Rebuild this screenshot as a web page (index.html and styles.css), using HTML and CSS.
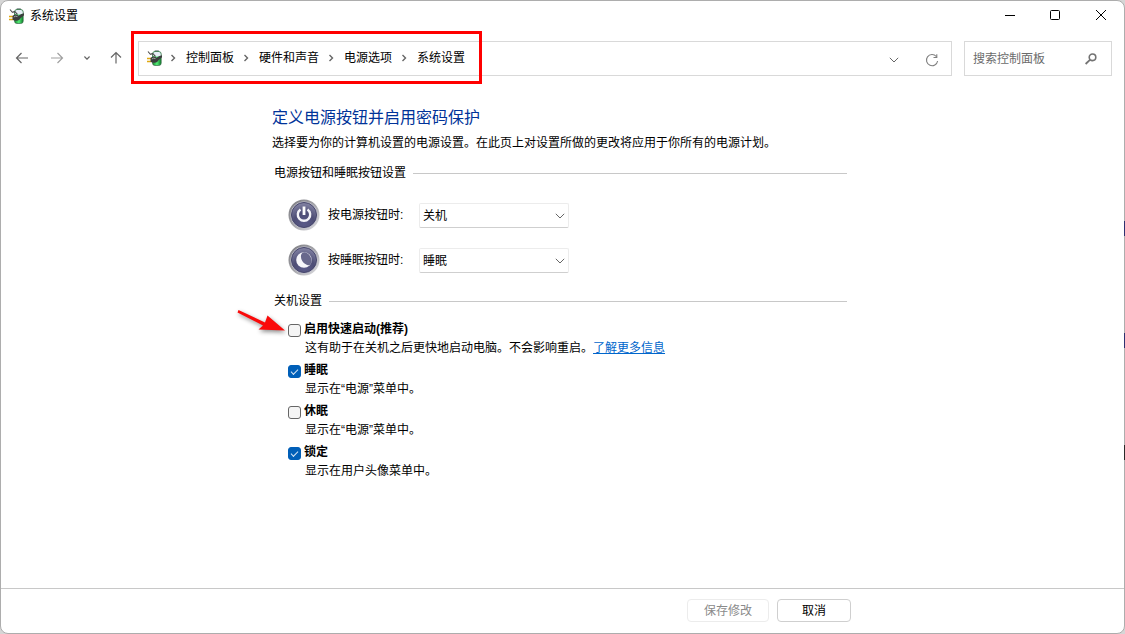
FILE: index.html
```html
<!DOCTYPE html>
<html lang="zh-CN">
<head>
<meta charset="utf-8">
<meta name="viewport" content="width=device-width, initial-scale=1">
<title>系统设置</title>
<link rel="stylesheet" href="styles.css">
</head>
<body>
<svg class="defs" aria-hidden="true">
  <defs>
    <linearGradient id="cell" x1="0" x2="1" y1="0" y2="0">
      <stop offset="0" stop-color="#168a2e"/><stop offset=".5" stop-color="#55ee78"/><stop offset="1" stop-color="#0d7a28"/>
    </linearGradient>
    <linearGradient id="ring" x1="0" x2="1" y1="0" y2="1">
      <stop offset="0" stop-color="#77777c"/><stop offset=".5" stop-color="#a5a5aa"/><stop offset="1" stop-color="#e2e2e6"/>
    </linearGradient>
    <radialGradient id="face" cx=".5" cy=".85" r=".85">
      <stop offset="0" stop-color="#5a5a88"/><stop offset=".5" stop-color="#4e4e76"/><stop offset="1" stop-color="#8686a6"/>
    </radialGradient>
    <symbol id="power-plug" viewBox="0 0 16 16">
      <rect x="7.500" y=".3" width="4.500" height="2" rx=".8" fill="#7d888c"/>
      <rect x="5.500" y="1.500" width="8.700" height="14" rx="2.500" fill="url(#cell)" stroke="#3b6b4a" stroke-width=".7"/>
      <path d="M6 6V4Q6 2 8 2h3.800Q13.800 2 13.800 4v2Q10 7 6 6z" fill="#e6edf6"/>
      <path d="M1 1.500l2.500 3M3.500 4.500Q6 2.500 7 5l1.500 1.500" fill="none" stroke="#4c4c4c" stroke-width="1.100"/>
      <path d="M0 8.500h4M0 11.500h4" stroke="#e0a912" stroke-width="1.400"/>
      <path d="M3.500 8Q5 6.300 8.500 7l1 .8 3-1.800 2.500-.8v2l-3.500 3Q10.500 12.500 8 12.800 4.500 13 3.500 11.500z" fill="#3b3d3d"/>
      <path d="M4.800 9Q6.500 7.600 8.500 8.600" fill="none" stroke="#a0a5a5" stroke-width="1"/>
    </symbol>
    <symbol id="crumb" viewBox="0 0 6 8"><path d="M1.500 1L4.500 4L1.500 7" fill="none" stroke="#666" stroke-width="1.400"/></symbol>
    <symbol id="down" viewBox="0 0 10 6"><path d="M.8 .8L5 5L9.200 .8" fill="none" stroke="#666" stroke-width="1"/></symbol>
  </defs>
</svg>

<div class="window">
  <header class="titlebar">
    <svg class="app-icon"><use href="#power-plug"/></svg>
    <span class="title">系统设置</span>
    <div class="controls">
      <button type="button" aria-label="最小化"><svg viewBox="0 0 12 12"><path d="M2 5.500h10" stroke="#000"/></svg></button>
      <button type="button" aria-label="最大化"><svg viewBox="0 0 12 12"><rect x="1.500" y=".5" width="9" height="9" rx="1" fill="none" stroke="#000"/></svg></button>
      <button type="button" aria-label="关闭"><svg viewBox="0 0 12 12"><path d="M1 0l10 10M11 0L1 10" stroke="#000"/></svg></button>
    </div>
  </header>

  <div class="toolbar">
    <nav class="history" aria-label="导航">
      <button type="button" aria-label="后退"><svg width="14" height="12" viewBox="0 0 14 12"><path d="M13 6H1.500M6.500 1L1.500 6l5 5" fill="none" stroke="#666" stroke-width="1.200"/></svg></button>
      <button type="button" aria-label="前进"><svg width="14" height="12" viewBox="0 0 14 12"><path d="M1 6h11.500M7.500 1l5 5-5 5" fill="none" stroke="#a0a0a0" stroke-width="1.200"/></svg></button>
      <button type="button" class="recent" aria-label="最近"><svg width="6" height="4" viewBox="0 0 6 4"><path d="M.4 .5L3 3.200L5.600 .5" fill="none" stroke="#666" stroke-width="1.200"/></svg></button>
      <button type="button" class="up" aria-label="向上"><svg width="12" height="13" viewBox="0 0 12 13"><path d="M6 12.500V1.500M1 6.500l5-5 5 5" fill="none" stroke="#666" stroke-width="1.200"/></svg></button>
    </nav>
    <div class="address">
      <div class="crumbs">
        <svg class="app-icon"><use href="#power-plug"/></svg>
        <svg class="sep"><use href="#crumb"/></svg>
        <a href="#">控制面板</a>
        <svg class="sep"><use href="#crumb"/></svg>
        <a href="#">硬件和声音</a>
        <svg class="sep"><use href="#crumb"/></svg>
        <a href="#">电源选项</a>
        <svg class="sep"><use href="#crumb"/></svg>
        <a href="#">系统设置</a>
        <span class="highlight"></span>
      </div>
      <div class="address-actions">
        <button type="button" aria-label="展开"><svg width="10" height="6"><use href="#down"/></svg></button>
        <button type="button" aria-label="刷新"><svg width="14" height="14" viewBox="0 0 14 14"><path d="M11.300 3.500A5.600 5.600 0 1 0 12.600 8M11.800 1.300V4.500H8.500" fill="none" stroke="#808080" stroke-width="1.100"/></svg></button>
      </div>
    </div>
    <div class="search">
      <input type="text" placeholder="搜索控制面板" aria-label="搜索控制面板">
      <svg width="12" height="12" viewBox="0 0 12 12"><circle cx="7.500" cy="4.300" r="3.300" fill="none" stroke="#737373" stroke-width="1.600"/><path d="M5.200 6.600L.6 11" stroke="#737373" stroke-width="1.800"/></svg>
    </div>
  </div>

  <main class="content">
    <h1>定义电源按钮并启用密码保护</h1>
    <p class="intro">选择要为你的计算机设置的电源设置。在此页上对设置所做的更改将应用于你所有的电源计划。</p>

    <section>
      <h2><span>电源按钮和睡眠按钮设置</span></h2>
      <div class="actions">
        <div class="action">
          <svg class="round" viewBox="0 0 32 32"><circle cx="16" cy="16" r="15.500" fill="url(#ring)"/><circle cx="16" cy="16" r="13.500" fill="#c4c4d0"/><circle cx="16" cy="16" r="12.500" fill="url(#face)" stroke="#45456a"/><path d="M12.500 10.500a6.200 6.200 0 1 0 7 0" fill="none" stroke="#f4f4f8" stroke-width="2.400"/><path d="M16 7.500V16" stroke="#fff" stroke-width="2.800"/></svg>
          <label for="power">按电源按钮时:</label>
          <div class="picker">
            <select id="power"><option>关机</option><option>睡眠</option></select>
            <svg width="10" height="6"><use href="#down"/></svg>
          </div>
        </div>
        <div class="action">
          <svg class="round" viewBox="0 0 32 32"><circle cx="16" cy="16" r="15.500" fill="url(#ring)"/><circle cx="16" cy="16" r="13.500" fill="#c4c4d0"/><circle cx="16" cy="16" r="12.500" fill="url(#face)" stroke="#45456a"/><circle cx="16" cy="16" r="7.800" fill="#f6f6fa"/><ellipse cx="18.300" cy="14.700" rx="4.600" ry="7" fill="#68688c" transform="rotate(-32 18.300 14.700)"/></svg>
          <label for="sleep-button">按睡眠按钮时:</label>
          <div class="picker">
            <select id="sleep-button"><option>睡眠</option><option>关机</option></select>
            <svg width="10" height="6"><use href="#down"/></svg>
          </div>
        </div>
      </div>
    </section>

    <section class="shutdown">
      <h2><span>关机设置</span></h2>
      <div class="options">
        <div class="option">
          <input type="checkbox" id="fast">
          <label for="fast">启用快速启动(推荐)</label>
          <p>这有助于在关机之后更快地启动电脑。不会影响重启。<a href="#">了解更多信息</a></p>
          <svg class="pointer" viewBox="0 0 52 32" aria-hidden="true"><path d="M1.500 2L28 14.500 30.500 7.500 48 22.500 21.500 21.500 26 17.500 .5 4.500z" fill="#fa0a0a"/></svg>
        </div>
        <div class="option">
          <input type="checkbox" id="sleep" checked>
          <label for="sleep">睡眠</label>
          <p>显示在“电源”菜单中。</p>
        </div>
        <div class="option">
          <input type="checkbox" id="hibernate">
          <label for="hibernate">休眠</label>
          <p>显示在“电源”菜单中。</p>
        </div>
        <div class="option">
          <input type="checkbox" id="lock" checked>
          <label for="lock">锁定</label>
          <p>显示在用户头像菜单中。</p>
        </div>
      </div>
    </section>
  </main>

  <footer class="footer">
    <div class="footer-inner">
      <button type="button" class="save" disabled>保存修改</button>
      <button type="button" class="cancel">取消</button>
    </div>
  </footer>
  <div class="backdrop" aria-hidden="true"><i></i><i></i><i class="dark"></i></div>
</div>
</body>
</html>
```

FILE: styles.css
```css
* { box-sizing: border-box; }

body {
  margin: 0;
  background: #d6d6d6;
  color: #000;
  font: 12px/20px "Liberation Sans", "Noto Sans CJK SC", sans-serif;
}

h1, h2, p { margin: 0; font-weight: 400; }
svg { display: block; flex: none; }
button, input, select { font: inherit; color: inherit; margin: 0; }
button { padding: 0; border: 0; background: none; }

.defs { position: absolute; width: 0; height: 0; }

.window {
  position: relative;
  display: flex;
  flex-direction: column;
  min-height: 100vh;
  background: #fff;
  border: 1px solid #adadad;
  border-radius: 8px;
}

/* Slivers of the windows behind, showing along the right edge */
.backdrop {
  position: absolute;
  top: 220px;
  right: -1px;
  display: grid;
  gap: 97px;
}
.backdrop i { width: 1px; height: 15px; background: #2d3170; }
.backdrop .dark { background: #2a2a2a; }

.titlebar {
  display: flex;
  align-items: center;
  height: 30px;
  padding-left: 8px;
}
.app-icon { width: 16px; height: 16px; }
.title { margin-left: 5px; }
.controls { display: flex; margin-left: auto; }
.controls button {
  display: grid;
  place-items: center;
  width: 46px;
  height: 30px;
}
.controls svg { width: 12px; height: 12px; }

.toolbar {
  display: flex;
  padding: 10px 12px 0 14px;
}
.history { display: flex; align-items: center; width: 123px; }
.history button { display: grid; place-items: center; width: 14px; height: 32px; margin-bottom: 2px; }
.history button + button { margin-left: 21px; }
.history button.recent { margin-left: 16px; }
.history button.up { margin-left: 15px; }

.address {
  display: flex;
  flex: 1;
  justify-content: space-between;
  height: 35px;
  border: 1px solid #d9d9d9;
}
.crumbs {
  position: relative;
  display: flex;
  align-items: center;
  padding: 0 16px 1px 8px;
}
.crumbs a { color: #000; text-decoration: none; }
.sep { width: 6px; height: 8px; margin: 0 10px 0 9px; }
.app-icon + .sep { margin-left: 7px; }
.highlight {
  position: absolute;
  inset: -11px -1px -9px -8px;
  border: 3px solid #ff0000;
  pointer-events: none;
}
.address-actions { display: flex; align-items: center; padding: 2px 12px 0 0; gap: 26px; }

.search {
  display: flex;
  align-items: center;
  width: 148px;
  height: 35px;
  margin-left: 12px;
  padding: 0 14px 0 8px;
  border: 1px solid #d9d9d9;
}
.search input {
  flex: 1;
  min-width: 0;
  padding: 0;
  border: 0;
  outline: 0;
  background: none;
}
.search input::placeholder { color: #6b6b6b; opacity: 1; }

.content {
  flex: 1;
  width: 100%;
  max-width: 581px;
  margin: 0 auto;
  padding: 30px 6px 24px 0;
}
h1 { color: #003399; font-size: 16px; line-height: 24px; }
.intro { margin-top: 3px; }

h2 {
  display: flex;
  align-items: center;
  gap: 7px;
  margin-top: 10px;
  padding-left: 2px;
  font-size: 12px;
}
h2 span { padding-top: 1px; line-height: 19px; }
h2::after { content: ""; flex: 1; height: 1px; background: #c8c8c8; }

.actions { display: grid; gap: 13px; margin-top: 16px; padding-left: 16px; }
.action { display: flex; align-items: center; }
.round { width: 32px; height: 32px; }
.action label { width: 91px; margin-left: 8px; }
.picker { display: grid; align-items: center; width: 150px; margin-top: 1px; }
.picker select, .picker svg { grid-area: 1 / 1; }
.picker svg { justify-self: end; margin-right: 4px; pointer-events: none; }
.picker select {
  width: 100%;
  height: 25px;
  padding: 1px 3px 0;
  border: 1px solid #ececec;
  border-bottom-color: #cfcfcf;
  border-radius: 2px;
  background: #fff;
  appearance: none;
}

.shutdown h2 { margin-top: 15px; }
.options { display: grid; gap: 4px; margin-top: 9px; padding-left: 16px; }
.option {
  position: relative;
  display: grid;
  grid-template-columns: 13px 1fr;
  column-gap: 3px;
  line-height: 18px;
}
.option label { justify-self: start; font-weight: 700; }
.option p { grid-column: 2; padding: 1px 0 0 1px; }
.option a { color: #0066cc; }
.option input {
  display: grid;
  place-items: center;
  width: 13px;
  height: 13px;
  margin-top: 4px;
  border: 1px solid #666;
  border-radius: 3px;
  background: #f5f5f5;
  appearance: none;
}
.option input:checked { border-color: #005fb8; background: #005fb8; }
.option input:checked::after {
  content: "";
  width: 6px;
  height: 3px;
  margin-bottom: 2px;
  border: solid #d5e5f5;
  border-width: 0 0 1px 1px;
  transform: rotate(-45deg);
}
.pointer {
  position: absolute;
  top: -12px;
  left: -51px;
  width: 52px;
  height: 32px;
  filter: drop-shadow(1px 2px 2px rgba(0, 0, 0, .45));
  pointer-events: none;
}

.footer { border-top: 1px solid #c8c8c8; }
.footer-inner {
  display: flex;
  justify-content: flex-end;
  gap: 8px;
  max-width: 581px;
  margin: 0 auto;
  padding: 10px 2px 11px;
}
.footer button {
  height: 23px;
  border: 1px solid #cfcfcf;
  border-radius: 4px;
  background: #fff;
}
.save { width: 82px; }
.cancel { width: 74px; }
.footer .save { color: #8a8a8a; border-color: #ececec; }
```
